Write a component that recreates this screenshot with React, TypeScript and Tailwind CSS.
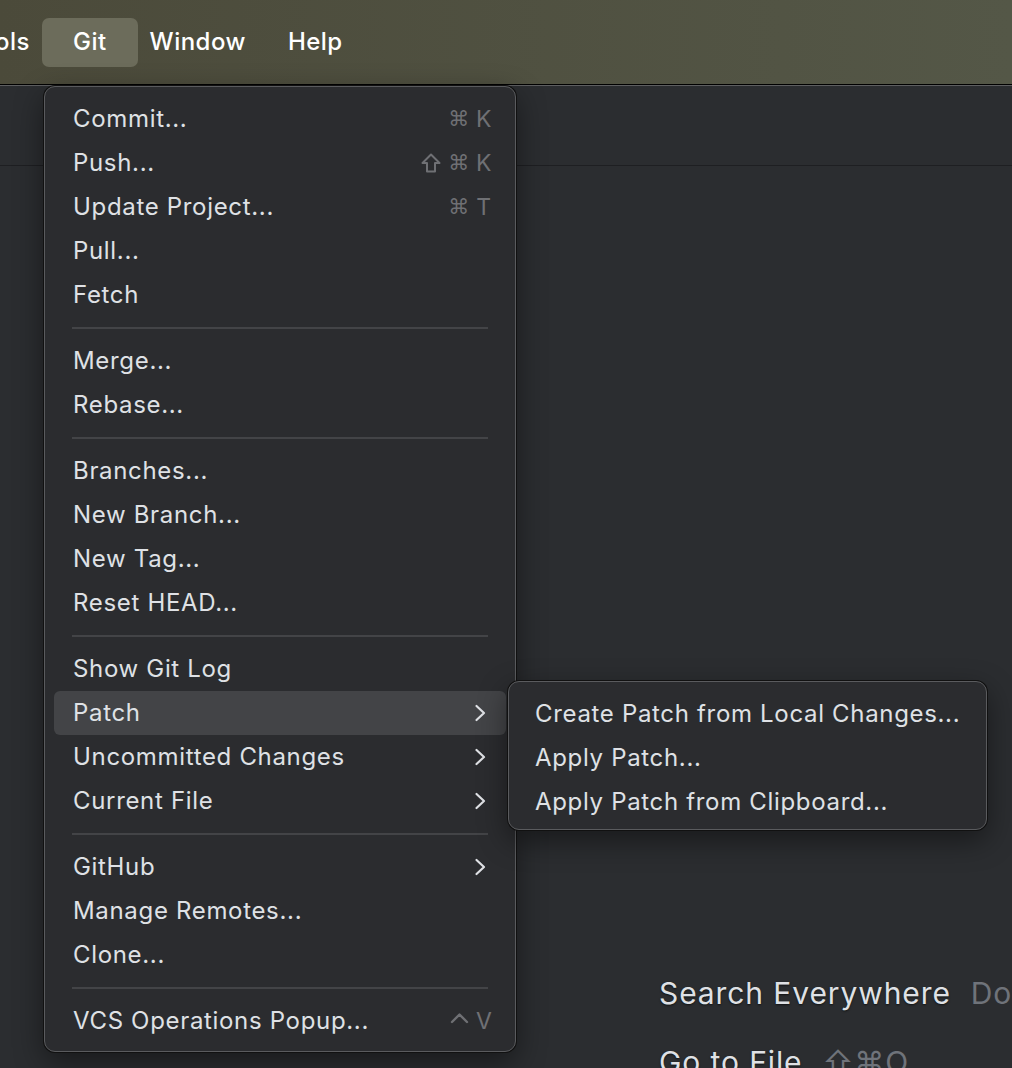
import React from 'react'

type Item =
  | { kind: 'sep' }
  | { kind: 'item'; label: string; keys?: string[]; submenu?: boolean; active?: boolean }

const gitMenu: Item[] = [
  { kind: 'item', label: 'Commit...', keys: ['⌘', 'K'] },
  { kind: 'item', label: 'Push...', keys: ['⇧', '⌘', 'K'] },
  { kind: 'item', label: 'Update Project...', keys: ['⌘', 'T'] },
  { kind: 'item', label: 'Pull...' },
  { kind: 'item', label: 'Fetch' },
  { kind: 'sep' },
  { kind: 'item', label: 'Merge...' },
  { kind: 'item', label: 'Rebase...' },
  { kind: 'sep' },
  { kind: 'item', label: 'Branches...' },
  { kind: 'item', label: 'New Branch...' },
  { kind: 'item', label: 'New Tag...' },
  { kind: 'item', label: 'Reset HEAD...' },
  { kind: 'sep' },
  { kind: 'item', label: 'Show Git Log' },
  { kind: 'item', label: 'Patch', submenu: true, active: true },
  { kind: 'item', label: 'Uncommitted Changes', submenu: true },
  { kind: 'item', label: 'Current File', submenu: true },
  { kind: 'sep' },
  { kind: 'item', label: 'GitHub', submenu: true },
  { kind: 'item', label: 'Manage Remotes...' },
  { kind: 'item', label: 'Clone...' },
  { kind: 'sep' },
  { kind: 'item', label: 'VCS Operations Popup...', keys: ['⌃', 'V'] },
]

const patchMenu = ['Create Patch from Local Changes...', 'Apply Patch...', 'Apply Patch from Clipboard...']

const Chevron = () => (
  <svg width="12" height="18" viewBox="0 0 12 18" fill="none" className="mr-[6px]">
    <path d="M2.5 2 L10 9 L2.5 16" stroke="#dfe1e5" strokeWidth="2.2" strokeLinecap="round" strokeLinejoin="round" />
  </svg>
)

// modifier glyphs drawn, letters stay text
const KeyGlyph = ({ k }: { k: string }) => {
  if (k === '⇧')
    return (
      <svg width="22" height="22" viewBox="0 0 22 22" fill="none">
        <path d="M11 2.5 L19.5 11 H15 V19.5 H7 V11 H2.5 Z" stroke="#6f7074" strokeWidth="2" strokeLinejoin="round" />
      </svg>
    )
  if (k === '⌃')
    return (
      <svg width="19" height="12" viewBox="0 0 19 12" fill="none" className="mb-[6px]">
        <path d="M2 10 L9.5 2.5 L17 10" stroke="#6f7074" strokeWidth="2.4" strokeLinecap="round" strokeLinejoin="round" />
      </svg>
    )
  if (k === '⌘')
    return (
      <span className="flex w-[20px] justify-center font-['DejaVu_Sans',sans-serif] text-[21px] leading-none">
        {k}
      </span>
    )
  return <span className="w-[16px] text-center text-[23px] leading-none">{k}</span>
}

const Shortcut = ({ keys }: { keys: string[] }) => (
  <div className="flex items-center gap-[7px] text-[#6f7074]">
    {keys.map((k, i) => (
      <KeyGlyph key={i} k={k} />
    ))}
  </div>
)

const MenuRow = ({ item }: { item: Extract<Item, { kind: 'item' }> }) => (
  <div
    className={
      'mx-[9px] flex h-[44px] items-center justify-between rounded-[6px] pl-[19px] pr-[14px] ' +
      (item.active ? 'bg-[#434447]' : '')
    }
  >
    <span className="whitespace-nowrap">{item.label}</span>
    {item.keys && <Shortcut keys={item.keys} />}
    {item.submenu && <Chevron />}
  </div>
)

export default function App() {
  return (
    <div className="relative flex h-[1068px] w-[1012px] flex-col overflow-hidden bg-[#2b2d30] font-['Inter',sans-serif] text-[#dfe1e5]">
      {/* macOS menu bar */}
      <header className="flex h-[85px] shrink-0 items-center border-b border-black bg-gradient-to-r from-[#4b4a3a] to-[#545747] text-[24px] font-medium tracking-[0.02em] text-white">
        <div className="flex w-[30px] justify-end overflow-hidden whitespace-nowrap">Tools</div>
        <div className="ml-[12px] flex h-[49px] items-center rounded-[7px] bg-[#6c6c5b] px-[31px]">Git</div>
        <span className="ml-[12px]">Window</span>
        <span className="ml-[42px]">Help</span>
      </header>

      {/* IDE window */}
      <div className="flex flex-1 flex-col border-t border-[#5d5e60]">
        <div className="h-[80px] shrink-0 border-b border-[#1e1f22]" />
        <div className="flex flex-1 flex-col gap-[33px] pl-[659px] pt-[809px] text-[30px] tracking-[0.03em]">
          <div className="flex h-[36px] items-center whitespace-nowrap">
            <span className="[text-shadow:0_1px_2px_rgba(0,0,0,0.6)]">Search Everywhere</span>
            <span className="ml-[20px] text-[#6f737a]">Double ⇧</span>
          </div>
          <div className="flex h-[36px] items-center whitespace-nowrap">
            <span className="[text-shadow:0_1px_2px_rgba(0,0,0,0.6)]">Go to File</span>
            <span className="ml-[20px] text-[#6f737a]">⇧⌘O</span>
          </div>
        </div>
      </div>

      {/* Git menu */}
      <div className="absolute left-[44px] top-[86px] w-[472px] rounded-[11px] border border-[#5a5b5e] bg-[#2b2c2f] pb-[8px] pt-[10px] text-[24px] tracking-[0.028em] shadow-[0_0_0_1px_#111,0_10px_30px_rgba(0,0,0,0.45)]">
        {gitMenu.map((item, i) =>
          item.kind === 'sep' ? (
            <div key={i} className="flex h-[22px] items-center px-[27px]">
              <div className="h-[2px] w-full bg-[#434447]" />
            </div>
          ) : (
            <MenuRow key={i} item={item} />
          )
        )}
      </div>

      {/* Patch submenu */}
      <div className="absolute left-[508px] top-[681px] w-[479px] rounded-[11px] border border-[#5a5b5e] bg-[#2b2c2f] pb-[5px] pt-[10px] text-[24px] tracking-[0.028em] shadow-[0_0_0_1px_#111,0_10px_30px_rgba(0,0,0,0.45)]">
        {patchMenu.map((label) => (
          <div key={label} className="mx-[9px] flex h-[44px] items-center whitespace-nowrap pl-[17px]">
            {label}
          </div>
        ))}
      </div>
    </div>
  )
}
